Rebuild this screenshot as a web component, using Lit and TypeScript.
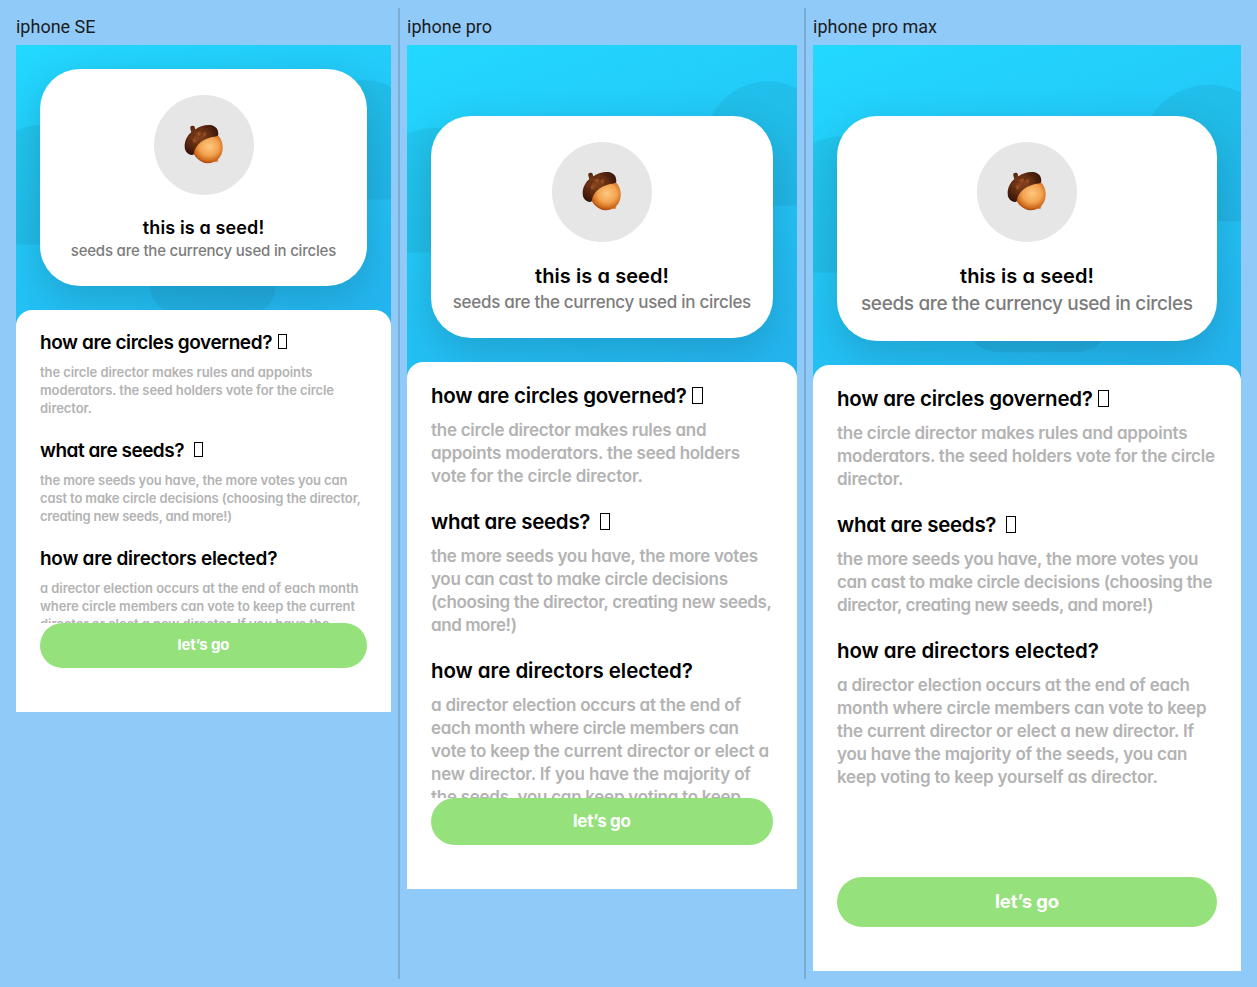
import { LitElement, html, css, svg } from "lit";
import { customElement, property, query } from "lit/decorators.js";
import { classMap } from "lit/directives/class-map.js";

interface Line {
  text: string;
  width: number;
}

interface Section {
  title: Line;
  glyph: number;
  body: Line[];
}

interface Device {
  size: "se" | "pro" | "max";
  label: Line;
  title: Line;
  subtitle: Line;
  sections: Section[];
  action: Line;
}

const line = (text: string, width: number): Line => ({ text, width });

const DEVICES: Device[] = [
  {
    size: "se",
    label: line("iphone SE", 79.5),
    title: line("this is a seed!", 121.5),
    subtitle: line("seeds are the currency used in circles", 265.5),
    sections: [
      {
        title: line("how are circles governed?", 232.5),
        glyph: 5,
        body: [
          line("the circle director makes rules and appoints", 272.5),
          line("moderators. the seed holders vote for the circle", 294),
          line("director.", 52),
        ],
      },
      {
        title: line("what are seeds?", 144.5),
        glyph: 9,
        body: [
          line("the more seeds you have, the more votes you can", 307.5),
          line("cast to make circle decisions (choosing the director,", 321),
          line("creating new seeds, and more!)", 192),
        ],
      },
      {
        title: line("how are directors elected?", 237.5),
        glyph: 0,
        body: [
          line("a director election occurs at the end of each month", 318.5),
          line("where circle members can vote to keep the current", 315),
          line("director or elect a new director. If you have the", 289.5),
        ],
      },
    ],
    action: line("let’s go", 52),
  },
  {
    size: "pro",
    label: line("iphone pro", 85),
    title: line("this is a seed!", 134),
    subtitle: line("seeds are the currency used in circles", 298.5),
    sections: [
      {
        title: line("how are circles governed?", 256),
        glyph: 5,
        body: [
          line("the circle director makes rules and", 275.5),
          line("appoints moderators. the seed holders", 309),
          line("vote for the circle director.", 212),
        ],
      },
      {
        title: line("what are seeds?", 159.5),
        glyph: 9,
        body: [
          line("the more seeds you have, the more votes", 327),
          line("you can cast to make circle decisions", 297),
          line("(choosing the director, creating new seeds,", 341),
          line("and more!)", 86),
        ],
      },
      {
        title: line("how are directors elected?", 262),
        glyph: 0,
        body: [
          line("a director election occurs at the end of", 310),
          line("each month where circle members can", 308),
          line("vote to keep the current director or elect a", 338),
          line("new director. If you have the majority of", 320),
          line("the seeds, you can keep voting to keep", 310),
        ],
      },
    ],
    action: line("let’s go", 58),
  },
  {
    size: "max",
    label: line("iphone pro max", 124),
    title: line("this is a seed!", 134),
    subtitle: line("seeds are the currency used in circles", 332),
    sections: [
      {
        title: line("how are circles governed?", 256),
        glyph: 5,
        body: [
          line("the circle director makes rules and appoints", 350.5),
          line("moderators. the seed holders vote for the circle", 378),
          line("director.", 66.5),
        ],
      },
      {
        title: line("what are seeds?", 159.5),
        glyph: 9,
        body: [
          line("the more seeds you have, the more votes you", 361.5),
          line("can cast to make circle decisions (choosing the", 375.5),
          line("director, creating new seeds, and more!)", 316.5),
        ],
      },
      {
        title: line("how are directors elected?", 262),
        glyph: 0,
        body: [
          line("a director election occurs at the end of each", 353),
          line("month where circle members can vote to keep", 369.5),
          line("the current director or elect a new director. If", 357),
          line("you have the majority of the seeds, you can", 350.5),
          line("keep voting to keep yourself as director.", 321),
        ],
      },
    ],
    action: line("let’s go", 64),
  },
];

/** One line of text whose tracking is adjusted to fill a set measure. */
@customElement("fit-line")
export class FitLine extends LitElement {
  static styles = css`
    :host {
      display: inline-block;
      white-space: pre;
      text-align: left;
    }
  `;

  @property() text = "";
  @property({ type: Number }) width = 0;
  @query("span") private span!: HTMLSpanElement;

  render() {
    return html`<span>${this.text}</span>`;
  }

  updated() {
    this.style.width = `${this.width}px`;
    this.span.style.letterSpacing = "0";
    const natural = this.span.getBoundingClientRect().width;
    const gap = (this.width - natural) / Math.max(1, this.text.length - 1);
    this.span.style.letterSpacing = `${gap.toFixed(3)}px`;
  }
}

const fit = (l: Line) => html`<fit-line .text=${l.text} .width=${l.width}></fit-line>`;

const acorn = svg`
  <defs>
    <radialGradient id="nut" cx="0.56" cy="0.42" r="0.62">
      <stop offset="0" stop-color="#ffc880"/>
      <stop offset="0.5" stop-color="#f2a350"/>
      <stop offset="0.8" stop-color="#cf6a1c"/>
      <stop offset="1" stop-color="#8f3505"/>
    </radialGradient>
    <radialGradient id="cap" cx="0.42" cy="0.4" r="0.62">
      <stop offset="0" stop-color="#8f4820"/>
      <stop offset="0.5" stop-color="#642d12"/>
      <stop offset="1" stop-color="#331408"/>
    </radialGradient>
  </defs>
  <path d="M90 110 L104 104 L104 114 L96 117Z" fill="#dc8b45"/>
  <path d="M24 80 C30 92 34 100 42 107 C51 115 60 120 71 120 C86 120 97 115 104 107 C114 98 119 83 118 67 C117 52 111 42 103 34 C70 25 34 45 24 80Z" fill="url(#nut)"/>
  <path d="M22 25 C22 20 17 12 20 8 C23 4 31 5 32 8 C34 12 33 15 35 16 C46 8 62 2 80 3 C97 5 107 17 104 35 C99 39 88 38 78 42 C55 49 43 60 34 76 C30 83 31 90 29 94 C20 96 9 91 4 80 C-2 62 6 38 22 25Z" fill="url(#cap)"/>
  <g fill="none" stroke="#2f1206" stroke-opacity="0.3" stroke-width="2">
    <path d="M16 34 C33 31 45 36 56 49 M38 20 C55 20 66 27 74 40 M63 7 C77 13 88 22 94 35"/>
    <path d="M8 52 C20 51 32 57 38 69 M75 7 C56 16 48 31 46 58 M46 13 C29 29 21 46 21 80"/>
  </g>
  <path d="M40 28 Q44 22 52 24 L49 36 Q42 36 40 28Z M26 46 L36 42 L37 54 L28 57Z M57 27 L67 25 L68 35 L60 38Z" fill="#b0602f" opacity="0.5"/>
`;

@customElement("phone-preview")
export class PhonePreview extends LitElement {
  static styles = css`
    :host {
      display: block;
      font-family: Inter, "Noto Sans", sans-serif;
      font-feature-settings: "cv11" 1;
      font-weight: 560;
    }
    .phone {
      position: relative;
      display: flex;
      flex-direction: column;
      overflow: hidden;
      box-sizing: border-box;
      --title: 20px;
      --title-line: 28px;
      --heading: 20.5px;
      --heading-line: 33px;
      --heading-shift: 2px;
      --body: 17px;
      --body-line: 23px;
      --body-gap: 7px;
      --section-gap: 17px;
      --top: 71px;
      --avatar-gap: 20px;
      --glyph-w: 10.5px;
      --glyph-h: 17px;
      --glyph-lift: 3px;
      background: #fff;
    }
    .se {
      width: 375px;
      height: 667px;
      --top: 24px;
      --avatar-gap: 21px;
      --title: 18px;
      --title-line: 24px;
      --sub: 15px;
      --sub-line: 22px;
      --heading: 19px;
      --heading-line: 30px;
      --body: 13px;
      --body-line: 18px;
      --body-gap: 6px;
      --section-gap: 18px;
      --card: 217px;
      --header: 291px;
      --button: 45px;
      --action: 15px;
      --glyph-w: 9.5px;
      --glyph-h: 15px;
      --glyph-lift: 3px;
    }
    .pro {
      width: 390px;
      height: 844px;
      --sub: 17px;
      --sub-line: 25px;
      --card: 222px;
      --header: 343px;
      --button: 47px;
      --action: 17px;
    }
    .max {
      width: 428px;
      height: 926px;
      --sub: 19px;
      --sub-line: 28px;
      --card: 225px;
      --header: 346px;
      --button: 50px;
      --action: 18.5px;
    }
    .backdrop {
      position: absolute;
      top: 0;
      left: 0;
      width: 100%;
      height: var(--header);
      overflow: hidden;
      background: linear-gradient(160deg, #22d9ff 0%, #24b2ee 100%);
    }
    .shapes {
      display: block;
      width: 100%;
    }
    .card {
      position: relative;
      flex: none;
      display: flex;
      flex-direction: column;
      align-items: center;
      box-sizing: border-box;
      height: var(--card);
      margin: var(--top) 24px 24px;
      padding-top: 26px;
      border-radius: 40px;
      background: #fff;
      box-shadow: 0 12px 40px rgba(0, 0, 0, 0.16);
    }
    .avatar {
      flex: none;
      display: flex;
      align-items: center;
      justify-content: center;
      width: 100px;
      height: 100px;
      margin-bottom: var(--avatar-gap);
      border-radius: 50%;
      background: #e6e6e6;
    }
    .acorn {
      width: 40px;
      height: 40px;
      margin-bottom: 2px;
    }
    .title {
      font-size: var(--title);
      line-height: var(--title-line);
      height: var(--title-line);
      font-weight: 640;
      color: #000;
    }
    .subtitle {
      font-size: var(--sub);
      line-height: var(--sub-line);
      height: var(--sub-line);
      font-weight: 500;
      color: #7c7c7c;
    }
    .sheet {
      position: relative;
      flex: 1;
      min-height: 0;
      display: flex;
      flex-direction: column;
      box-sizing: border-box;
      padding: 17px 24px 44px;
      border-radius: 16px 16px 0 0;
      background: #fff;
    }
    .content {
      flex: 1;
      min-height: 0;
      overflow: hidden;
    }
    .section {
      margin-bottom: var(--section-gap);
    }
    .heading {
      display: flex;
      align-items: center;
      box-sizing: border-box;
      height: var(--heading-line);
      padding-top: var(--heading-shift);
      margin-bottom: var(--body-gap);
      font-size: var(--heading);
      line-height: 1.4;
      font-weight: 640;
      color: #000;
    }
    .glyph {
      box-sizing: border-box;
      width: var(--glyph-w);
      height: var(--glyph-h);
      margin-bottom: var(--glyph-lift);
      border: 1px solid #000;
    }
    .row {
      height: var(--body-line);
      font-size: var(--body);
      line-height: var(--body-line);
      color: #b3b3b3;
      white-space: nowrap;
    }
    .action {
      flex: none;
      display: flex;
      align-items: center;
      justify-content: center;
      height: var(--button);
      padding: 0 0 2px;
      box-sizing: border-box;
      border: 0;
      border-radius: 25px;
      background: #95e17c;
      color: #fff;
      font: inherit;
      font-feature-settings: inherit;
      font-size: var(--action);
      font-weight: 750;
    }
  `;

  @property({ attribute: false }) device!: Device;

  render() {
    const d = this.device;
    return html`
      <div class=${classMap({ phone: true, [d.size]: true })}>
        <div class="backdrop">
          <svg class="shapes" viewBox="0 0 1000 950" fill="#000" fill-opacity="0.055">
            <path d="M765 253 A160 160 0 0 1 1085 253 V412 H765Z" />
            <path d="M-90 373 A160 160 0 0 1 230 373 V532 H-90Z" />
            <rect x="357" y="400" width="336" height="318" rx="75" />
          </svg>
        </div>
        <div class="card">
          <div class="avatar">
            <svg class="acorn" viewBox="0 0 122 122">${acorn}</svg>
          </div>
          <div class="title">${fit(d.title)}</div>
          <div class="subtitle">${fit(d.subtitle)}</div>
        </div>
        <div class="sheet">
          <div class="content">
            ${d.sections.map(
              (s) => html`
                <div class="section">
                  <div class="heading">
                    ${fit(s.title)}
                    ${s.glyph ? html`<span class="glyph" style="margin-left:${s.glyph}px"></span>` : null}
                  </div>
                  ${s.body.map((l) => html`<div class="row">${fit(l)}</div>`)}
                </div>
              `
            )}
          </div>
          <button class="action">${fit(d.action)}</button>
        </div>
      </div>
    `;
  }
}

@customElement("app-root")
export class AppRoot extends LitElement {
  static styles = css`
    :host {
      display: block;
      box-sizing: border-box;
      height: 987px;
      padding: 8px 16px;
      background: #90caf9;
    }
    .board {
      display: flex;
      gap: 7px;
      height: 100%;
    }
    .divider {
      flex: none;
      width: 2px;
      background: rgba(0, 0, 0, 0.15);
    }
    .label {
      height: 37px;
      font: 400 18px/38px Roboto, sans-serif;
      color: #1c1c1c;
    }
  `;

  render() {
    return html`
      <div class="board">
        ${DEVICES.map(
          (d, i) => html`
            ${i ? html`<div class="divider"></div>` : null}
            <div class="column">
              <div class="label">${fit(d.label)}</div>
              <phone-preview .device=${d}></phone-preview>
            </div>
          `
        )}
      </div>
    `;
  }
}
